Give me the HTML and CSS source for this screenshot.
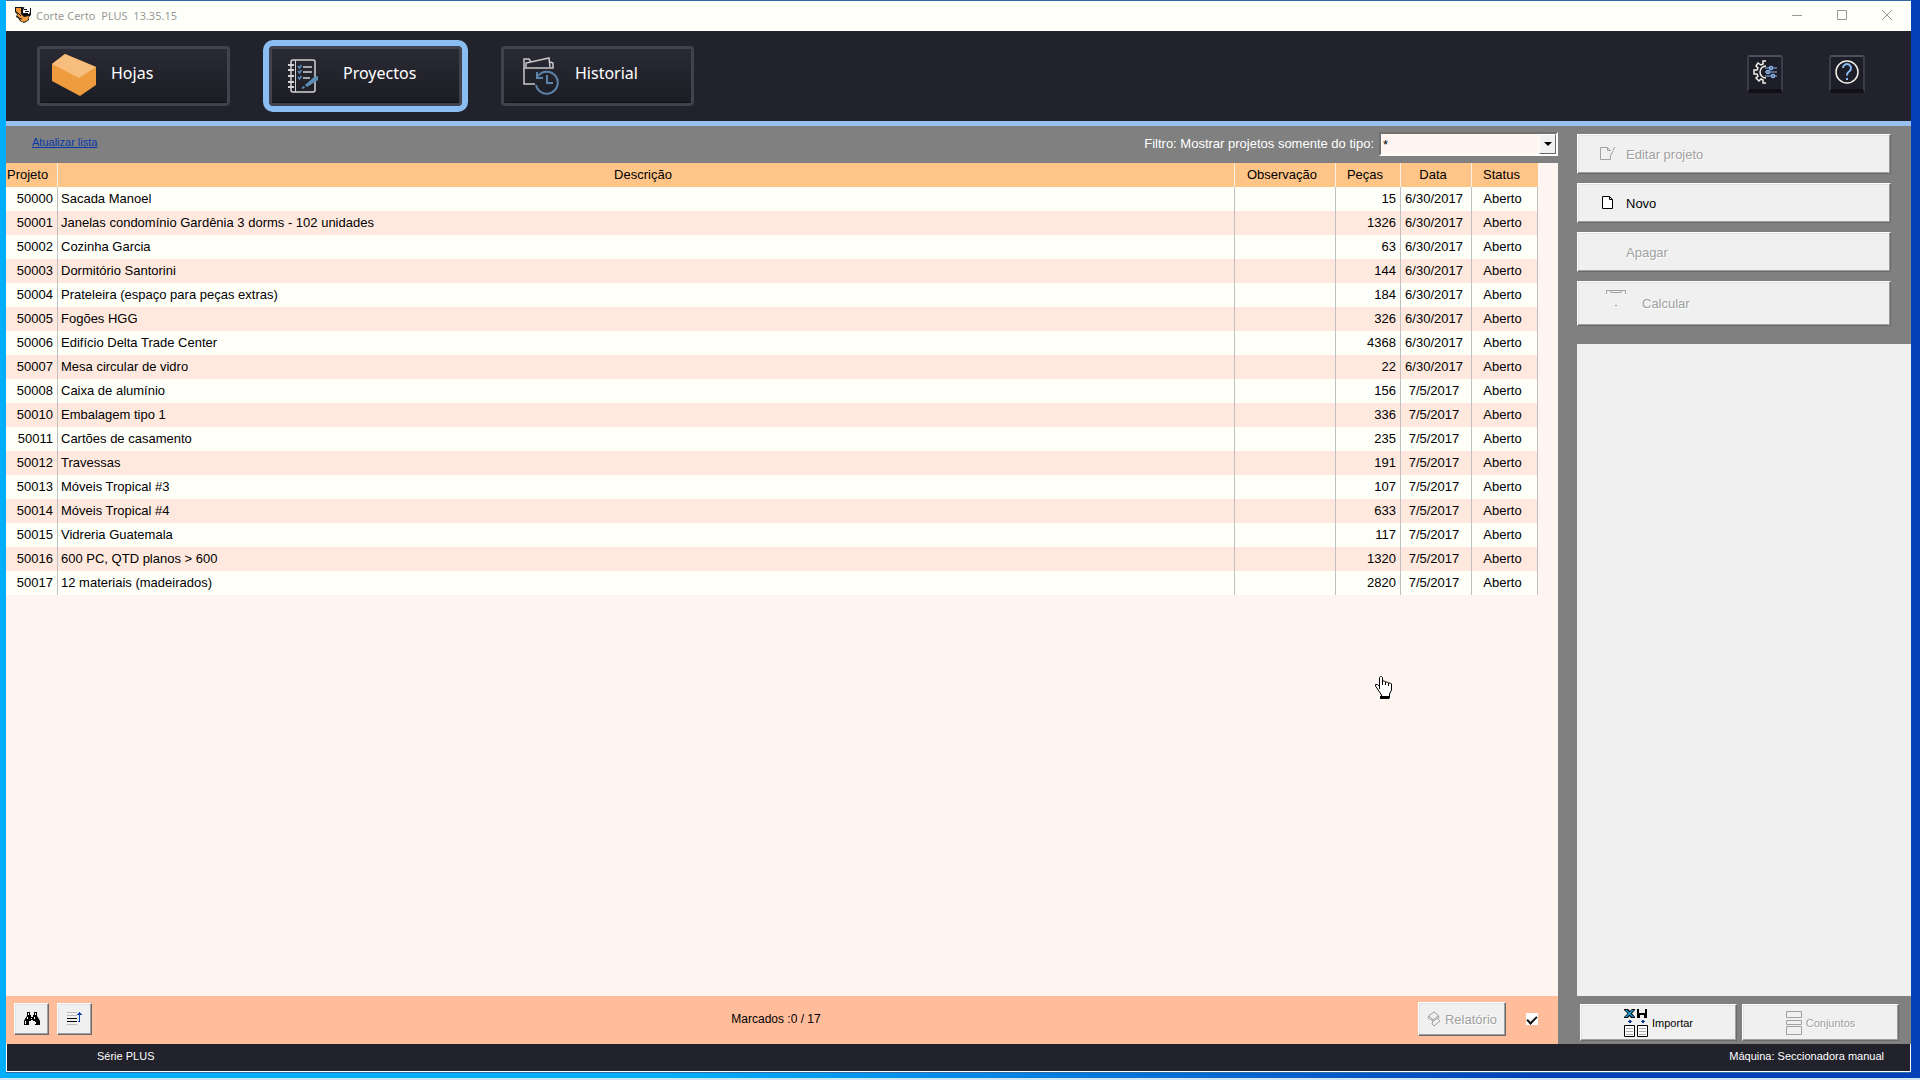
FILE: index.html
```html
<!DOCTYPE html>
<html lang="pt">
<head>
  <meta charset="UTF-8">
  <meta name="viewport" content="width=device-width, initial-scale=1.0">
  <title>Corte Certo PLUS</title>
  <link rel="stylesheet" href="styles.css">
</head>
<body>
  <div class="window">
    <header class="titlebar">
      <svg class="app-icon" width="16" height="16" viewBox="0 0 16 16">
        <path d="M0 0h8l2 1h6v7l-2 2v3l-3 2-2 1-2-1-2-1-2-3-2-1 1-3-2-2z" fill="#111"/>
        <path d="M1 1h5v6l3 3 5-1-1 4-4 2-3-1-2-4-2-1 1-3-2-2z" fill="#ef9a3d"/>
        <path d="M9 1h6v4l-1 2h-4L8 6V4z" fill="#fff"/>
        <path d="M9 2.500h3M10 4.500h4M8 6.500h5M3 6l3 3M5 11l2 1" stroke="#111" fill="none"/>
      </svg>
      <span class="title">Corte Certo&nbsp; PLUS&nbsp; 13.35.15</span>
      <div class="window-buttons">
        <button aria-label="Minimizar"><svg width="10" height="10"><path d="M0 5.5h10" stroke="#999"/></svg></button>
        <button aria-label="Maximizar"><svg width="10" height="10"><path d="M.5.5h9v9h-9z" stroke="#999" fill="none"/></svg></button>
        <button aria-label="Fechar"><svg width="10" height="10"><path d="M0 0l10 10M10 0L0 10" stroke="#999"/></svg></button>
      </div>
    </header>

    <nav class="navbar">
      <button class="nav-button sheets">
        <svg width="44" height="44" viewBox="0 0 44 44">
          <path d="M0 10L13 0l31 13v18L28 42 0 27z" fill="#ef9c3f"/>
          <path d="M0 10L13 0l31 13-17 11z" fill="#f7bd7c"/>
        </svg>
        <span>Hojas</span>
      </button>
      <button class="nav-button projects active">
        <svg width="32" height="34" viewBox="0 0 32 34" fill="none">
          <rect x="4" y="1" width="24" height="32" rx="2" stroke="#d4d4d4" stroke-width="1.5"/>
          <path d="M8.500 1v32" stroke="#d4d4d4"/>
          <path d="M1 6h6M1 11h6M1 17h6M1 23h6M1 28h6" stroke="#d4d4d4" stroke-width="2"/>
          <path d="M16 8h9M16 13h9M16 19h7" stroke="#d4d4d4" stroke-width="1.500"/>
          <path d="M11 7l1.500 2 2-3M11 12l1.500 2 2-3M11 18l1.500 2 2-3" stroke="#5c8fbf" stroke-width="1.500"/>
          <path d="M31 17v4l-11 7-2-2 9-8zM15 28l2-1 1 2-3 1z" fill="#5c8fb8"/>
        </svg>
        <span>Proyectos</span>
      </button>
      <button class="nav-button history">
        <svg width="36" height="38" viewBox="0 0 36 38" fill="none">
          <path d="M12 27H1V11h29V6l-3-1M1 11V2h5l2 3M3 10V6l23-5 1 9" stroke="#c9c9c9" stroke-width="1.500"/>
          <path d="M15 19a11 11 0 1 1-2 9" stroke="#5c83ac" stroke-width="2"/>
          <path d="M14 15v6h6M24 18v8h6" stroke="#5c83ac" stroke-width="2"/>
        </svg>
        <span>Historial</span>
      </button>
      <div class="nav-tools">
        <button class="tool-button" aria-label="Configurações">
          <svg width="24" height="24" viewBox="0 0 24 24" fill="none">
            <path d="M13 1h-3v3L8 5 5 3 3 6l2 2-1 2H1v4h3l1 2-2 2 3 3 2-2 2 1v3h3M13 6a6 6 0 0 0 0 12" stroke="#f0f0e8" stroke-width="1.500"/>
            <path d="M12 8h12M12 12h12M12 16h12" stroke="#8ab8f0"/>
            <g fill="#22222c" stroke="#8ab8f0" stroke-width="1.500"><circle cx="18" cy="8" r="1.500"/><circle cx="15" cy="12" r="1.500"/><circle cx="20" cy="16" r="1.500"/></g>
          </svg>
        </button>
        <button class="tool-button" aria-label="Ajuda">
          <svg width="24" height="24" viewBox="0 0 24 24" fill="none">
            <circle cx="12" cy="12" r="11" stroke="#f0f0e8" stroke-width="1.500"/>
            <path d="M8 8a4 4 0 1 1 6 3.500c-1.500 1-2 1.500-2 4" stroke="#8abcf4" stroke-width="2"/>
            <path d="M11 18h2v2h-2z" fill="#8abcf4"/>
          </svg>
        </button>
      </div>
    </nav>

    <div class="workspace">
      <main class="list">
        <div class="toolbar">
          <a href="#" class="refresh">Atualizar lista</a>
          <div class="filter">
            <label for="tipo">Filtro: Mostrar projetos somente do tipo:</label>
            <div class="select-box">
              <select id="tipo">
                <option>*</option>
              </select>
              <span class="arrow"><svg width="8" height="4"><path d="M0 0h8L4 4z"/></svg></span>
            </div>
          </div>
        </div>

        <div class="table-area">
          <table class="projects-table">
            <colgroup>
              <col class="col-id">
              <col>
              <col class="col-note">
              <col class="col-parts">
              <col class="col-date">
              <col class="col-status">
            </colgroup>
            <thead>
              <tr><th>Projeto</th><th>Descrição</th><th>Observação</th><th>Peças</th><th>Data</th><th>Status</th></tr>
            </thead>
            <tbody>
              <tr><td>50000</td><td>Sacada Manoel</td><td></td><td>15</td><td>6/30/2017</td><td>Aberto</td></tr>
              <tr><td>50001</td><td>Janelas condomínio Gardênia 3 dorms - 102 unidades</td><td></td><td>1326</td><td>6/30/2017</td><td>Aberto</td></tr>
              <tr><td>50002</td><td>Cozinha Garcia</td><td></td><td>63</td><td>6/30/2017</td><td>Aberto</td></tr>
              <tr><td>50003</td><td>Dormitório Santorini</td><td></td><td>144</td><td>6/30/2017</td><td>Aberto</td></tr>
              <tr><td>50004</td><td>Prateleira (espaço para peças extras)</td><td></td><td>184</td><td>6/30/2017</td><td>Aberto</td></tr>
              <tr><td>50005</td><td>Fogões HGG</td><td></td><td>326</td><td>6/30/2017</td><td>Aberto</td></tr>
              <tr><td>50006</td><td>Edifício Delta Trade Center</td><td></td><td>4368</td><td>6/30/2017</td><td>Aberto</td></tr>
              <tr><td>50007</td><td>Mesa circular de vidro</td><td></td><td>22</td><td>6/30/2017</td><td>Aberto</td></tr>
              <tr><td>50008</td><td>Caixa de alumínio</td><td></td><td>156</td><td>7/5/2017</td><td>Aberto</td></tr>
              <tr><td>50010</td><td>Embalagem tipo 1</td><td></td><td>336</td><td>7/5/2017</td><td>Aberto</td></tr>
              <tr><td>50011</td><td>Cartões de casamento</td><td></td><td>235</td><td>7/5/2017</td><td>Aberto</td></tr>
              <tr><td>50012</td><td>Travessas</td><td></td><td>191</td><td>7/5/2017</td><td>Aberto</td></tr>
              <tr><td>50013</td><td>Móveis Tropical #3</td><td></td><td>107</td><td>7/5/2017</td><td>Aberto</td></tr>
              <tr><td>50014</td><td>Móveis Tropical #4</td><td></td><td>633</td><td>7/5/2017</td><td>Aberto</td></tr>
              <tr><td>50015</td><td>Vidreria Guatemala</td><td></td><td>117</td><td>7/5/2017</td><td>Aberto</td></tr>
              <tr><td>50016</td><td>600 PC, QTD planos &gt; 600</td><td></td><td>1320</td><td>7/5/2017</td><td>Aberto</td></tr>
              <tr><td>50017</td><td>12 materiais (madeirados)</td><td></td><td>2820</td><td>7/5/2017</td><td>Aberto</td></tr>
            </tbody>
          </table>
        </div>

        <div class="list-footer">
          <div class="footer-tools">
            <button class="button small" aria-label="Procurar">
              <svg width="16" height="14" viewBox="0 0 16 14">
                <path d="M3 0h3v3h1v2h2V3h1V0h3v4l2 3 1 2v4h-5V9H9V8H7v1H5v4H0V9l1-2 2-3z"/>
                <path d="M4 1h1v2H4zM11 1h1v2h-1zM3 5h1v2H3zM7 6h1v1H7zM10 5h1v2h-1zM1 9h1v3H1zM11 10h1v2h-1z" fill="#fff"/>
              </svg>
            </button>
            <button class="button small" aria-label="Ordenar">
              <svg width="16" height="14" viewBox="0 0 16 14">
                <path d="M0 0h10v1H0zM0 3h10v1H0zM0 12h10v1H0z" fill="#bbb"/>
                <path d="M0 6h10v1H0zM0 9h10v1H0z"/>
                <path d="M12 0h1v1h1v1h1v1h-2v7h-2V9h1V3h-2V2h1V1h1z" fill="#0a46b8"/>
              </svg>
            </button>
          </div>
          <span class="marked">Marcados :0 / 17</span>
          <div class="footer-report">
            <button class="button report" disabled>
              <svg width="14" height="16" viewBox="0 0 14 16" fill="none" stroke="#a0a0a0"><path d="M2 4.500L7 1l5 4-1 3 2 2-6 5-2-2 1-3-5-3zM2 5l4 4 5-4M6 10l5-3"/></svg>
              Relatório
            </button>
            <input type="checkbox" class="check" aria-label="Marcar" checked>
          </div>
        </div>
      </main>

      <aside class="side">
        <div class="actions">
          <button class="button" disabled>
            <svg width="16" height="14" viewBox="0 0 16 14" fill="none" stroke="#a0a0a0"><path d="M10.500 9v3.500H.5V.5h7l3 3M7.500.5v3h3M15 0l-2 3M13.500 3.500L10 9"/></svg>
            Editar projeto
          </button>
          <button class="button">
            <svg width="16" height="14" viewBox="0 0 16 14"><path d="M2.500.5h7l3 3v9h-10zM9.500.5v3h3" fill="#fff" stroke="#000"/></svg>
            Novo
          </button>
          <button class="button" disabled>
            <svg width="16" height="14"></svg>
            Apagar
          </button>
          <button class="button calculate" disabled>
            <svg width="20" height="28" viewBox="0 0 20 28" fill="none" stroke="#a0a0a0"><path d="M.5 4V.5h19V4M3 .5h2v2h10v-2h2M9 15.500h2"/></svg>
            Calcular
          </button>
        </div>
        <div class="preview"></div>
        <div class="side-footer">
          <button class="button">
            <svg width="24" height="28" viewBox="0 0 24 28">
              <path d="M0 0h4l2 2 2-2h3v1L8 4.500 11 8v1H7L5.500 7 4 9H0V8l3.500-3.500L0 1z"/>
              <path d="M1 1h2l7 7H8zM8 1h2L3 8H1z" fill="#1ba4e0"/>
              <path d="M13 0h2v4h6V0h2v9h-3V6h-4v3h-3z"/>
              <path d="M5 11h2v1h1v1H7v1H5v-1H4v-1h1zM18 11h2v1h1v1h-1v1h-2v-1h-1v-1h1z" fill="#123c98"/>
              <path d="M.5 16.500h10v11H.5zM13.500 16.500h10v11h-10z" fill="#fff" stroke="#000"/>
              <path d="M2 19.500h7M2 22.500h7M2 25.500h7M15 19.500h7M15 22.500h7M15 25.500h7" stroke="#aaa"/>
            </svg>
            Importar
          </button>
          <button class="button" disabled>
            <svg width="16" height="24" viewBox="0 0 16 24" fill="none" stroke="#a0a0a0"><path d="M.5.5h15v6H.5zM.5 9.500h15v4H.5zM.5 15.500h15v8H.5z"/></svg>
            Conjuntos
          </button>
        </div>
      </aside>
    </div>

    <footer class="statusbar">
      <span>Série PLUS</span>
      <span>Máquina: Seccionadora manual</span>
    </footer>
  </div>
  <div class="taskbar"></div>

  <svg class="cursor" width="17" height="23" viewBox="0 0 17 23">
    <path d="M4.500 13V1.500l1-1h1l1 1V5h2l1 1h2l1 1h2l1 1v6l-2 4v4h-8v-3l-4-6-2-3V8.500h2l2 2" fill="#fff" stroke="#000"/>
    <path d="M7.500 5v4M10.500 6v3M13.500 7v3" stroke="#000"/>
    <path d="M5 20h9v3H5z"/>
  </svg>
</body>
</html>
```

FILE: styles.css
```css
* {
  box-sizing: border-box;
}

body {
  display: flex;
  flex-direction: column;
  height: 100vh;
  margin: 0;
  overflow: hidden;
  font-family: "Liberation Sans", Arial, sans-serif;
  font-size: 13px;
  color: #000;
  background: linear-gradient(90deg, #00aefc 35%, #0440b8 80%);
}

button {
  font-family: inherit;
  font-size: inherit;
}

.window {
  flex: 1;
  display: flex;
  flex-direction: column;
  min-height: 0;
  margin: 0 9px 5px 6px;
  border-top: 1px solid #2f6ca4;
  border-bottom: 1px solid #2f6ca4;
}

/* Title bar */
.titlebar {
  display: flex;
  align-items: center;
  height: 30px;
  padding: 0 2px 2px 9px;
  background: #fffffa;
  color: #999;
  font-family: "Noto Sans", sans-serif;
  font-size: 11px;
}

.title {
  flex: 1;
  margin-left: 5px;
}

.window-buttons {
  display: flex;
}

.window-buttons button {
  width: 45px;
  padding: 0;
  border: none;
  background: none;
}

/* Main navigation */
.navbar {
  display: flex;
  align-items: center;
  gap: 27px;
  height: 95px;
  padding: 0 46px 0 25px;
  background: #22222c;
  border-bottom: 5px solid #98c0f2;
}

.nav-button {
  display: flex;
  align-items: center;
  width: 205px;
  height: 72px;
  padding: 0;
  border: 6px solid transparent;
  border-radius: 10px;
  background: linear-gradient(#2b2b36, #1b1b23) padding-box;
  box-shadow: inset 0 0 0 3px #42424f, inset 0 -4px #101016;
  color: #fff;
  font-family: "Noto Sans", sans-serif;
  font-size: 16px;
}

.nav-button span {
  padding-bottom: 6px;
}

.nav-button.sheets {
  gap: 15px;
  padding-left: 15px;
}

.nav-button.projects {
  gap: 24px;
  padding-left: 18px;
}

.nav-button.history {
  gap: 16px;
  padding-left: 22px;
}

.nav-button.active {
  border-color: #8abef2;
}

.nav-tools {
  display: flex;
  gap: 46px;
  margin-left: auto;
  padding-bottom: 5px;
}

.tool-button {
  display: grid;
  place-items: center;
  width: 36px;
  height: 38px;
  padding: 0 0 2px;
  border: 2px solid #3c3c4a;
  border-top-color: #50505c;
  border-bottom: 4px solid #101016;
  border-radius: 3px;
  background: #1e1e28;
}

/* Workspace */
.workspace {
  flex: 1;
  display: flex;
  min-height: 0;
  background: #808080;
}

.list {
  flex: 1;
  display: flex;
  flex-direction: column;
}

.toolbar {
  display: flex;
  justify-content: space-between;
  height: 37px;
  padding: 6px 0 0 26px;
}

.refresh {
  padding-top: 4px;
  color: #0438a8;
  font-size: 11px;
}

.filter {
  display: flex;
  align-items: center;
  gap: 5px;
  height: 24px;
  color: #fff;
}

.filter label {
  padding-bottom: 2px;
}

.select-box {
  position: relative;
  width: 179px;
}

.select-box select {
  display: block;
  width: 100%;
  height: 24px;
  padding: 0 22px 0 2px;
  border: 2px solid;
  border-color: #707070 #fff #fff #707070;
  border-radius: 0;
  background: #fff5f0;
  font-family: inherit;
  font-size: 13px;
  appearance: none;
}

.arrow {
  position: absolute;
  top: 2px;
  right: 2px;
  display: grid;
  place-items: center;
  width: 17px;
  height: 20px;
  border: 1px solid;
  border-color: #fff #696969 #696969 #fff;
  background: #f0f0f0;
  pointer-events: none;
}

.table-area {
  flex: 1;
  padding-right: 20px;
  background: #fff5f0;
}

.projects-table {
  width: 100%;
  table-layout: fixed;
  border-collapse: separate;
  border-spacing: 0;
}

.col-id { width: 52px; }
.col-note { width: 101px; }
.col-parts { width: 65px; }
.col-date { width: 71px; }
.col-status { width: 66px; }

.projects-table th,
.projects-table td {
  height: 24px;
  padding: 0 4px 2px 3px;
  border-right: 1px solid #c0c0c0;
  white-space: nowrap;
}

.projects-table th {
  padding: 0 6px 2px 0;
  border-color: #f5f0ea;
  background: #ffc488;
  font-weight: normal;
}

.projects-table th:first-child {
  padding-left: 1px;
  text-align: left;
}

.projects-table th:last-child {
  border-color: #ffc488;
}

.projects-table tbody tr {
  background: #fffffa;
}

.projects-table tbody tr:nth-child(even) {
  background: #ffe9de;
}

.projects-table td:nth-child(1),
.projects-table td:nth-child(4) {
  text-align: right;
}

.projects-table td:nth-child(5),
.projects-table td:nth-child(6) {
  padding: 0 4px 2px 0;
  text-align: center;
}

/* Raised buttons */
.button {
  display: flex;
  align-items: center;
  padding: 0;
  border: 1px solid;
  border-color: #fff #696969 #696969 #fff;
  border-radius: 0;
  background: #f0f0f0;
  box-shadow: inset -1px -1px #a0a0a0, inset 1px 1px #e3e3e3;
  color: #000;
}

.button:disabled {
  color: #a0a0a0;
  text-shadow: 1px 1px #fff;
}

.list-footer {
  display: grid;
  grid-template-columns: 1fr auto 1fr;
  align-items: center;
  height: 48px;
  padding: 0 20px 2px 8px;
  background: #ffbd9b;
}

.footer-tools {
  display: flex;
  gap: 8px;
}

.footer-report {
  display: flex;
  align-items: center;
  justify-content: flex-end;
  gap: 20px;
}

.button.small {
  justify-content: center;
  width: 35px;
  height: 32px;
}

.marked {
  font-size: 12px;
}

.report {
  justify-content: center;
  gap: 4px;
  width: 88px;
  height: 34px;
}

.check {
  appearance: none;
  display: grid;
  place-items: center;
  width: 12px;
  height: 12px;
  margin: 0;
  background: #fff;
}

.check:checked::before {
  content: "";
  width: 8px;
  height: 4px;
  border: solid #111;
  border-width: 0 0 2px 2px;
  transform: rotate(-45deg);
}

/* Side panel */
.side {
  display: flex;
  flex-direction: column;
  width: 353px;
  padding-left: 19px;
}

.actions {
  display: flex;
  flex-direction: column;
  gap: 9px;
  padding: 8px 20px 18px 0;
}

.actions .button {
  gap: 10px;
  height: 40px;
  padding-left: 22px;
}

.actions .calculate {
  gap: 16px;
  height: 45px;
  padding-left: 28px;
}

.preview {
  flex: 1;
  background: #f0f0f0;
}

.side-footer {
  display: grid;
  grid-template-columns: 1fr 1fr;
  gap: 5px;
  height: 48px;
  padding: 8px 12px 3px 3px;
}

.side-footer .button {
  justify-content: center;
  gap: 4px;
  font-size: 11px;
}

.statusbar {
  display: flex;
  align-items: center;
  justify-content: space-between;
  height: 28px;
  padding: 0 26px 4px 90px;
  border: solid #fff;
  border-width: 0 1px 1px;
  background: #22222c;
  color: #fff;
  font-size: 11px;
}

.taskbar {
  height: 2px;
  background: #d2e6f0;
}

.cursor {
  position: absolute;
  top: 676px;
  left: 1375px;
}
```
